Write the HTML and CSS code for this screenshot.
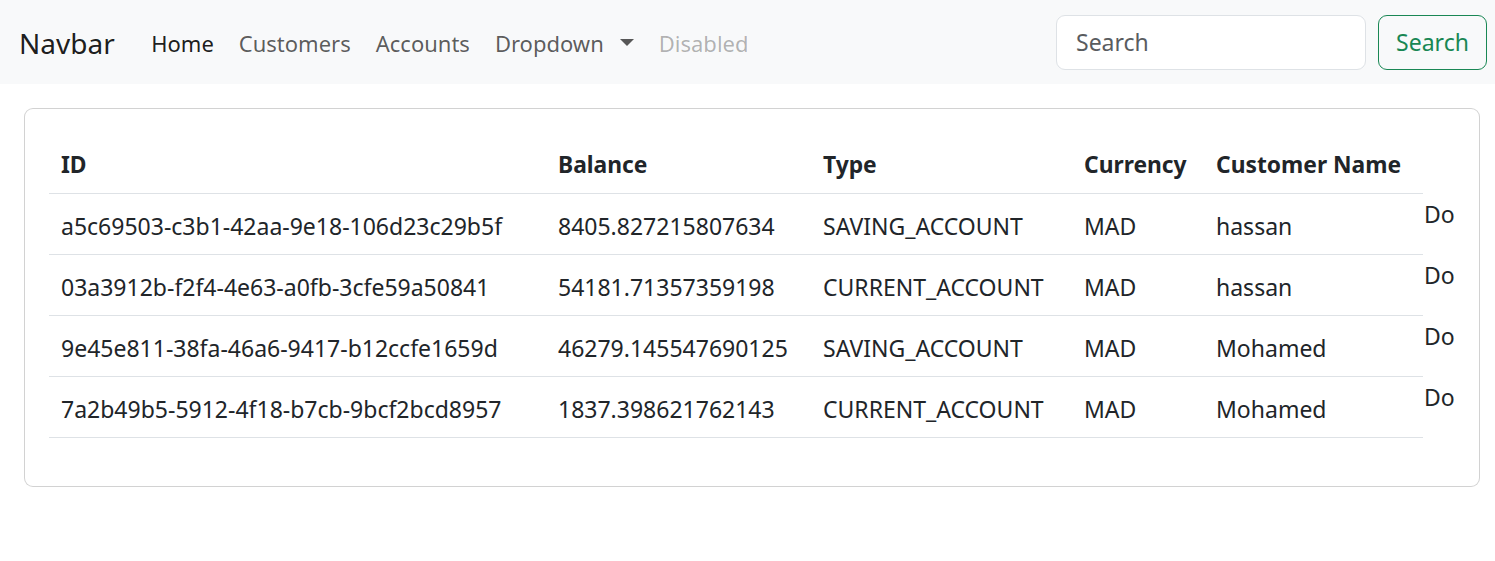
FILE: index.html
```html
<!DOCTYPE html>
<html lang="en">
<head>
<meta charset="utf-8">
<title>Accounts</title>
<link rel="stylesheet" href="styles.css">
</head>
<body>
<nav class="navbar">
  <a class="brand" href="#">Navbar</a>
  <ul class="nav">
    <li><a class="nav-link active" href="#">Home</a></li>
    <li><a class="nav-link" href="#">Customers</a></li>
    <li><a class="nav-link" href="#">Accounts</a></li>
    <li><a class="nav-link dropdown" href="#">Dropdown<span class="caret"></span></a></li>
    <li><a class="nav-link disabled" href="#">Disabled</a></li>
  </ul>
  <form class="search">
    <input class="search-input" type="search" placeholder="Search">
    <button class="btn-search" type="button">Search</button>
  </form>
</nav>
<main class="card">
  <table class="table">
    <colgroup>
      <col class="c-id"><col class="c-bal"><col class="c-type"><col class="c-cur"><col class="c-name"><col class="c-act">
    </colgroup>
    <thead>
      <tr><th>ID</th><th>Balance</th><th>Type</th><th>Currency</th><th>Customer Name</th><th class="act"></th></tr>
    </thead>
    <tbody>
      <tr><td>a5c69503-c3b1-42aa-9e18-106d23c29b5f</td><td>8405.827215807634</td><td>SAVING_ACCOUNT</td><td>MAD</td><td>hassan</td><td class="act">Do</td></tr>
      <tr><td>03a3912b-f2f4-4e63-a0fb-3cfe59a50841</td><td>54181.71357359198</td><td>CURRENT_ACCOUNT</td><td>MAD</td><td>hassan</td><td class="act">Do</td></tr>
      <tr><td>9e45e811-38fa-46a6-9417-b12ccfe1659d</td><td>46279.145547690125</td><td>SAVING_ACCOUNT</td><td>MAD</td><td>Mohamed</td><td class="act">Do</td></tr>
      <tr><td>7a2b49b5-5912-4f18-b7cb-9bcf2bcd8957</td><td>1837.398621762143</td><td>CURRENT_ACCOUNT</td><td>MAD</td><td>Mohamed</td><td class="act">Do</td></tr>
    </tbody>
  </table>
</main>
</body>
</html>
```
FILE: styles.css
```css
* { box-sizing: border-box; }
html, body { margin: 0; padding: 0; }
body {
  font-family: "Noto Sans", "Open Sans", sans-serif;
  font-size: 23px;
  line-height: 36px;
  color: #212529;
  background: #fff;
}
.navbar {
  display: flex;
  align-items: center;
  height: 84px;
  padding: 1px 8px 0 19px;
  background: #f8f9fa;
}
.brand {
  font-size: 28px;
  color: rgba(0,0,0,.9);
  text-decoration: none;
  margin-right: 24px;
}
.nav {
  display: flex;
  list-style: none;
  margin: 0;
  padding: 0;
}
.nav-link {
  display: flex;
  align-items: center;
  padding: 0 12.5px;
  font-size: 22px;
  color: rgba(0,0,0,.65);
  text-decoration: none;
}
.nav-link.active { color: rgba(0,0,0,.9); }
.nav-link.disabled { color: rgba(0,0,0,.3); }
.caret {
  display: inline-block;
  margin-left: 16px;
  width: 0;
  height: 0;
  border-top: 7px solid rgba(0,0,0,.65);
  border-left: 7px solid transparent;
  border-right: 7px solid transparent;
}
.search {
  display: flex;
  margin-left: auto;
  margin-top: -1px;
  gap: 12px;
}
.search-input {
  width: 310px;
  height: 55px;
  padding: 0 19px;
  font: inherit;
  color: #212529;
  background: #fff;
  border: 1px solid #dee2e6;
  border-radius: 9px;
  outline: none;
}
.search-input::placeholder { color: #595c5f; opacity: 1; }
.btn-search {
  width: 109px;
  height: 55px;
  padding: 0;
  font: inherit;
  color: #198754;
  background: transparent;
  border: 1px solid #198754;
  border-radius: 9px;
}
.card {
  display: block;
  margin: 24px 15px 0 24px;
  padding: 24px;
  border: 1px solid rgba(0,0,0,.175);
  border-radius: 9px;
  background: #fff;
}
.table {
  width: 100%;
  table-layout: fixed;
  border-collapse: collapse;
  margin-bottom: 24px;
  color: #212529;
}
.c-id { width: 497px; }
.c-bal { width: 265px; }
.c-type { width: 261px; }
.c-cur { width: 132px; }
.c-name { width: 219px; }
.c-act { width: 32px; }
th, td {
  padding: 14px 12px 10px;
  text-align: left;
  white-space: nowrap;
  border-bottom: 1px solid #dee2e6;
}
th { font-weight: 700; font-size: 22.8px; }
td.act, th.act {
  padding: 2px 0 0 1px;
  border-bottom: none;
  vertical-align: top;
  overflow: visible;
}
```
